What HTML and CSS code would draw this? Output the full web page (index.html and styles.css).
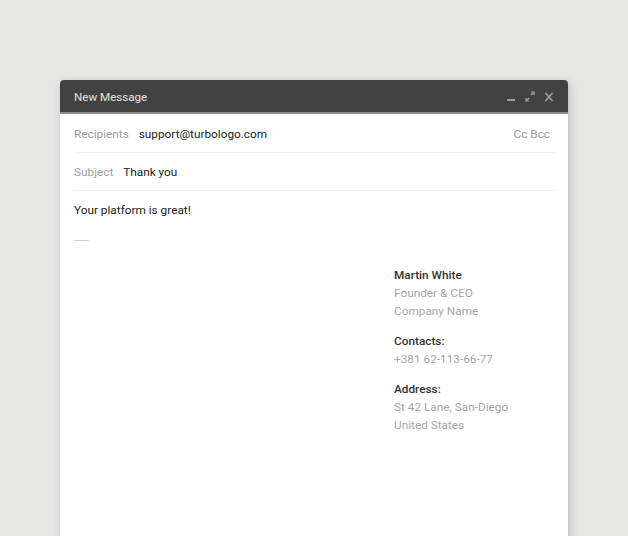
FILE: index.html
```html
<!DOCTYPE html>
<html>
<head>
<meta charset="utf-8">
<link rel="stylesheet" href="styles.css">
</head>
<body>
<div class="window">
  <div class="titlebar">
    <span class="title">New Message</span>
    <div class="controls">
      <svg class="ic" width="10" height="12" viewBox="0 0 10 12"><rect x="1" y="8" width="8" height="2" fill="#9a9a9a"/></svg>
      <svg class="ic" width="10" height="12" viewBox="0 0 10 12"><path d="M1 10 L4 7 M6 4 L9 1" stroke="#9a9a9a" stroke-width="1.6"/><path d="M6 1 H9 V4" stroke="#9a9a9a" stroke-width="1.2" fill="none"/><path d="M1 7 V10 H4" stroke="#9a9a9a" stroke-width="1.2" fill="none"/></svg>
      <svg class="ic" width="10" height="12" viewBox="0 0 10 12"><path d="M1.5 2 L8.5 10 M8.5 2 L1.5 10" stroke="#9a9a9a" stroke-width="1.8"/></svg>
    </div>
  </div>
  <div class="content">
    <div class="row row-first">
      <span class="label">Recipients</span>
      <span class="value">support@turbologo.com</span>
      <span class="ccbcc">Cc Bcc</span>
    </div>
    <div class="row">
      <span class="label">Subject</span>
      <span class="value">Thank you</span>
    </div>
    <div class="body">
      <p class="msg">Your platform is great!</p>
      <div class="dash"></div>
      <div class="signature">
        <div class="group">
          <div class="strong">Martin White</div>
          <div class="muted">Founder &amp; CEO</div>
          <div class="muted">Company Name</div>
        </div>
        <div class="group">
          <div class="strong">Contacts:</div>
          <div class="muted">+381 62-113-66-77</div>
        </div>
        <div class="group">
          <div class="strong">Address:</div>
          <div class="muted">St 42 Lane, San-Diego</div>
          <div class="muted">United States</div>
        </div>
      </div>
    </div>
  </div>
</div>
</body>
</html>
```

FILE: styles.css
```css
html, body {
  margin: 0;
  padding: 0;
}
body {
  background: #e6e6e4;
  font-family: Roboto, "Liberation Sans", sans-serif;
  font-size: 11.8px;
  color: #222;
  overflow: hidden;
  height: 536px;
}
.window {
  margin: 80px 0 0 60px;
  width: 508px;
  height: 470px;
  background: #fff;
  border-radius: 4px 4px 0 0;
  box-shadow: 2px 2px 8px rgba(0,0,0,0.18);
}
.titlebar {
  height: 32px;
  box-sizing: border-box;
  height: 34px;
  padding: 1px 14px 0;
  background: #424242;
  border-radius: 4px 4px 0 0;
  border-bottom: 2px solid #8c8c8c;
  display: flex;
  align-items: center;
}
.title {
  color: #e4e4e4;
  font-size: 11.6px;
  flex: 1;
}
.controls {
  display: flex;
  gap: 9px;
  align-items: center;
}
.ic { display: block; }
.content {
  padding: 0 13px 0 14px;
}
.row {
  display: flex;
  align-items: center;
  height: 38px;
  box-sizing: border-box;
  border-bottom: 1px solid #f0f0f0;
}
.row-first {
  height: 39px;
  padding-top: 1px;
}
.label {
  color: #9e9e9e;
  margin-right: 10px;
}
.value {
  color: #222;
  flex: 1;
}
.ccbcc {
  color: #9e9e9e;
  margin-right: 5px;
}
.body {
  padding-top: 11px;
}
.msg {
  margin: 0;
  line-height: 16px;
}
.dash {
  width: 15px;
  height: 1px;
  background: #cfcfcf;
  margin-top: 22px;
}
.signature {
  margin: 25px 0 0 320px;
  line-height: 18px;
}
.group + .group {
  margin-top: 12px;
}
.strong {
  font-weight: 500;
  color: #333;
}
.muted {
  color: #a6a6a6;
}
```
